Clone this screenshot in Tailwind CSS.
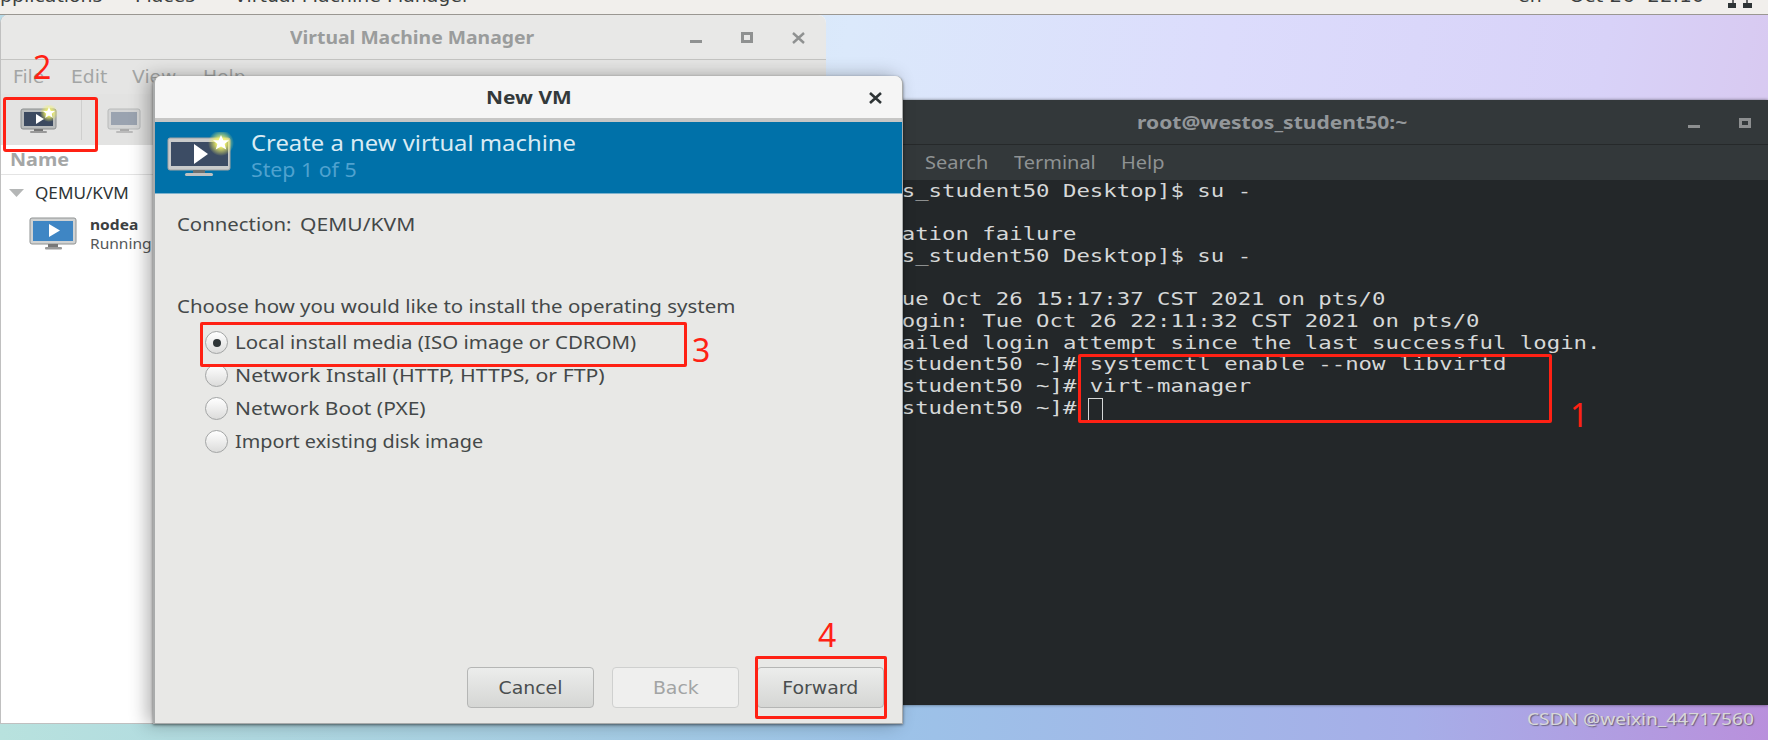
<!DOCTYPE html>
<html>
<head>
<meta charset="utf-8">
<script src="https://cdn.jsdelivr.net/npm/@tailwindcss/browser@4"></script>
</head>
<body class="m-0">
<div class="relative w-[1768px] h-[740px] overflow-hidden font-['DejaVu_Sans',sans-serif] bg-[linear-gradient(100deg,#b9dbe8_0%,#dbe9fb_45%,#dcdcfc_65%,#d8d2f8_85%,#d8c4ec_100%)]">
  <!-- lower desktop strip -->
  <div class="absolute left-0 right-0 bottom-0 h-[36px] bg-[linear-gradient(90deg,#b8e2de_0%,#9cc3e8_50%,#a6aee8_80%,#b990dc_100%)]"></div>

  <!-- Top bar -->
  <div class="absolute left-0 top-0 w-full h-[15px] bg-[#f1efec] border-b border-[#9a9792] overflow-hidden text-[#3c3f40] text-[18px] leading-none">
    <span class="absolute left-[-13px] top-[-13px] origin-left scale-x-[1.05]">Applications</span>
    <span class="absolute left-[135px] top-[-13px] origin-left scale-x-[1.05]">Places</span>
    <span class="absolute left-[234px] top-[-13px] origin-left scale-x-[1.05]">Virtual Machine Manager</span>
    <span class="absolute left-[1518px] top-[-13px] origin-left scale-x-[1.05]">en</span>
    <span class="absolute left-[1569px] top-[-13px] origin-left scale-x-[1.1]">Oct 26&nbsp;&nbsp;22:10</span>
    <svg class="absolute left-[1728px] top-0" width="24" height="9" viewBox="0 0 24 9"><path d="M5 0v4M19 0v4" stroke="#3c3f40" stroke-width="1.5"/><rect x="0" y="3" width="8" height="5" fill="#2e3436"/><rect x="15" y="3" width="9" height="5" fill="#2e3436"/></svg>
  </div>

  <!-- Terminal -->
  <div class="absolute left-[700px] top-[100px] w-[1068px] h-[605px] flex flex-col bg-[#232729] shadow-[0_0_3px_rgba(0,0,0,0.5)]">
    <div class="relative h-[45px] shrink-0 bg-[#33383a] border-b border-[#26292a]">
      <span class="absolute left-[437px] top-[9px] text-[18px] leading-[26px] font-bold text-[#93979a] font-['Noto_Sans',sans-serif] origin-left scale-x-[1.17]">root@westos_student50:~</span>
      <div class="absolute left-[988px] top-[25px] w-[12px] h-[3px] bg-[#8d8f90]"></div>
      <div class="absolute left-[1039px] top-[18px] w-[12px] h-[10px] border-[3px] border-[#8d8f90]"></div>
    </div>
    <div class="h-[35px] shrink-0 bg-[#33383a] flex items-center pl-[225px] text-[18px] text-[#8e9293] font-['Noto_Sans',sans-serif]">
      <span class="w-[89px] origin-left scale-x-[1.11]">Search</span><span class="w-[107px] origin-left scale-x-[1.11]">Terminal</span><span class="origin-left scale-x-[1.11]">Help</span>
    </div>
    <pre class="m-0 mt-px ml-[27px] text-[17px] leading-[21.67px] text-[#d6d8d8] font-['DejaVu_Sans_Mono',monospace] origin-left scale-x-[1.313]">[westos@westos_student50 Desktop]$ su -
Password:
su: Authentication failure
[westos@westos_student50 Desktop]$ su -
Password:
Last login: Tue Oct 26 15:17:37 CST 2021 on pts/0
Last failed login: Tue Oct 26 22:11:32 CST 2021 on pts/0
There was 1 failed login attempt since the last successful login.
[root@westos_student50 ~]# systemctl enable --now libvirtd
[root@westos_student50 ~]# virt-manager
[root@westos_student50 ~]#</pre>
    <div class="absolute left-[388px] top-[298px] w-[15px] h-[23px] border border-[#d6d8d8]"></div>
  </div>

  <!-- VMM window -->
  <div class="absolute left-0 top-[15px] w-[826px] h-[709px] rounded-t-[8px] bg-white border-l border-[#c0c0c0] border-b flex flex-col overflow-hidden">
    <div class="relative h-[45px] shrink-0 bg-[#e8e8e7] border-b border-[#c4c4c2]">
      <span class="absolute left-[289px] top-[9px] text-[18px] leading-[26px] font-bold text-[#9a9c9c] font-['Noto_Sans',sans-serif] origin-left scale-x-[1.075]">Virtual Machine Manager</span>
      <div class="absolute left-[689px] top-[25px] w-[12px] h-[3px] bg-[#8f9191]"></div>
      <div class="absolute left-[740px] top-[17px] w-[12px] h-[11px] border-[3px] border-[#8f9191]"></div>
      <svg class="absolute left-[791px] top-[17px]" width="13" height="12" viewBox="0 0 13 12"><path d="M1 1l11 10M12 1L1 11" stroke="#8f9191" stroke-width="2.4"/></svg>
    </div>
    <div class="h-[34px] shrink-0 bg-[#e5e5e4] flex items-center pl-[12px] pt-[2px] text-[17px] text-[#a3a5a5]">
      <span class="w-[58px] origin-left scale-x-[1.1]">File</span><span class="w-[61px] origin-left scale-x-[1.1]">Edit</span><span class="w-[71px] origin-left scale-x-[1.1]">View</span><span class="origin-left scale-x-[1.1]">Help</span>
    </div>
    <div class="relative h-[51px] shrink-0 bg-[#e3e3e2]">
      <svg class="absolute left-[18px] top-[11px]" width="40" height="30" viewBox="0 0 40 30"><defs><radialGradient id="g1"><stop offset="0.3" stop-color="#f4f46a"/><stop offset="1" stop-color="#f4f46a" stop-opacity="0"/></radialGradient></defs><rect x="2" y="4" width="35" height="20" rx="2" fill="#b9bcbc" stroke="#8b8e8e"/><rect x="5" y="7" width="29" height="14" fill="#3c4a60"/><path d="M17 9v10l8-5z" fill="#fff"/><rect x="15" y="24" width="9" height="2" fill="#777"/><rect x="11" y="26" width="17" height="2" rx="1" fill="#999"/><circle cx="30" cy="8" r="9" fill="url(#g1)"/><path d="M30 2l1.800 4h4.200l-3.300 2.800 1.200 4.200-3.900-2.400-3.900 2.400 1.200-4.200-3.300-2.800h4.200z" fill="#fff"/></svg>
      <div class="absolute left-[80px] top-[6px] w-px h-[40px] bg-[#cfcfce]"></div>
      <svg class="absolute left-[105px] top-[11px]" width="36" height="30" viewBox="0 0 36 30"><rect x="2" y="4" width="32" height="20" rx="2" fill="#d4d5d5" stroke="#b8baba"/><rect x="5" y="7" width="26" height="13" fill="#9aa3b0"/><rect x="14" y="24" width="9" height="2" fill="#aaa"/><rect x="10" y="26" width="17" height="2" rx="1" fill="#bbb"/></svg>
    </div>
    <div class="h-[30px] shrink-0 bg-white border-b border-[#e4e4e4] pl-[9px] pt-[1px] text-[18px] leading-[26px] font-bold text-[#a4a6a6] font-['Noto_Sans',sans-serif]"><span class="inline-block origin-left scale-x-[1.1]">Name</span></div>
    <div class="flex items-center h-[36px] shrink-0 pl-[8px] gap-[11px] text-[16px] text-[#2e3436] font-['Noto_Sans',sans-serif]">
      <svg width="15" height="8" viewBox="0 0 15 8"><path d="M0 0h15L7.500 8z" fill="#b4b6b6"/></svg>
      <span class="origin-left scale-x-[1.07]">QEMU/KVM</span>
    </div>
    <div class="flex items-start pl-[28px] pt-[6px] gap-[13px]">
      <svg width="48" height="34" viewBox="0 0 48 34"><rect x="1" y="1" width="46" height="26" rx="2" fill="#d0d2d2" stroke="#8f9292"/><rect x="4" y="4" width="40" height="20" fill="#3f86c4"/><path d="M20 7v13l11-6.500z" fill="#fff"/><rect x="19" y="27" width="10" height="3" fill="#777"/><rect x="16" y="30" width="17" height="2.500" rx="1" fill="#999"/></svg>
      <div class="flex flex-col text-[14px] leading-[19px] text-[#555859] -mt-[2px] font-['Noto_Sans',sans-serif]">
        <span class="font-bold text-[#3c4041] origin-left scale-x-[1.11]">nodea</span>
        <span class="origin-left scale-x-[1.11]">Running</span>
      </div>
    </div>
  </div>

  <!-- New VM dialog -->
  <div class="absolute left-[153px] top-[76px] w-[750px] h-[648px] rounded-t-[8px] bg-[#e8e8e6] border-l-2 border-r border-b border-[#a9abab] flex flex-col overflow-hidden shadow-[-6px_0_18px_rgba(0,0,0,0.3),0_1px_3px_rgba(0,0,0,0.5)]">
    <div class="relative h-[46px] shrink-0 bg-[#f5f5f5] border-b-[4px] border-[#c6c6c5] flex items-center justify-center">
      <span class="text-[18px] font-bold text-[#33393a] font-['Noto_Sans',sans-serif] scale-x-[1.16]">New VM</span>
      <svg class="absolute left-[714px] top-[16px]" width="13" height="12" viewBox="0 0 13 12"><path d="M1 1l11 10M12 1L1 11" stroke="#2e3436" stroke-width="2.600"/></svg>
    </div>
    <div class="flex items-center h-[72px] shrink-0 bg-[#0071a9] border-b border-[#7eb2cd] pl-[12px] gap-[16px]">
      <svg width="68" height="52" viewBox="0 0 68 52"><defs><radialGradient id="g2"><stop offset="0.3" stop-color="#f5f56a"/><stop offset="1" stop-color="#f5f56a" stop-opacity="0"/></radialGradient></defs><rect x="1" y="6" width="62" height="32" rx="2" fill="#c9cbcb" stroke="#a0a3a3"/><rect x="4" y="10" width="57" height="24" fill="#3c4c64"/><path d="M27 12v20l14-10z" fill="#fff"/><rect x="26" y="38" width="12" height="3" fill="#6c6f6f"/><rect x="18" y="41" width="28" height="3" rx="1.500" fill="#bfc1c1"/><circle cx="54" cy="11" r="13" fill="url(#g2)"/><path d="M54 3l2.400 5.200h5.600l-4.400 3.800 1.600 5.600-5.200-3.200-5.200 3.200 1.600-5.600-4.400-3.800h5.600z" fill="#fff"/></svg>
      <div class="flex flex-col -mt-[3px] font-['Noto_Sans',sans-serif]">
        <span class="text-[21px] leading-[28px] text-[#d9ebf4] origin-left scale-x-[1.135]">Create a new virtual machine</span>
        <span class="text-[19px] leading-[26px] text-[#4fa2cf] origin-left scale-x-[1.12]">Step 1 of 5</span>
      </div>
    </div>
    <div class="flex flex-col grow pl-[22px] text-[18px] text-[#444849] font-['Noto_Sans',sans-serif]">
      <div class="mt-[18px] leading-[24px] flex"><span class="w-[123px] origin-left scale-x-[1.13]">Connection:</span><span class="origin-left scale-x-[1.17]">QEMU/KVM</span></div>
      <div class="mt-[58px] leading-[24px] origin-left scale-x-[1.137]">Choose how you would like to install the operating system</div>
      <div class="flex flex-col pl-[28px] mt-[8px]">
        <div class="flex items-center h-[33px] gap-[7px]"><span class="flex items-center justify-center w-[23px] h-[23px] rounded-full border border-[#a3a5a5] bg-[linear-gradient(#fff,#dcdcdb)]"><span class="w-[8px] h-[8px] rounded-full bg-[#2e3436]"></span></span><span class="origin-left scale-x-[1.137]">Local install media (ISO image or CDROM)</span></div>
        <div class="flex items-center h-[33px] gap-[7px]"><span class="w-[23px] h-[23px] rounded-full border border-[#a3a5a5] bg-[linear-gradient(#fff,#dcdcdb)]"></span><span class="origin-left scale-x-[1.18]">Network Install (HTTP, HTTPS, or FTP)</span></div>
        <div class="flex items-center h-[33px] gap-[7px]"><span class="w-[23px] h-[23px] rounded-full border border-[#a3a5a5] bg-[linear-gradient(#fff,#dcdcdb)]"></span><span class="origin-left scale-x-[1.165]">Network Boot (PXE)</span></div>
        <div class="flex items-center h-[33px] gap-[7px]"><span class="w-[23px] h-[23px] rounded-full border border-[#a3a5a5] bg-[linear-gradient(#fff,#dcdcdb)]"></span><span class="origin-left scale-x-[1.1]">Import existing disk image</span></div>
      </div>
    </div>
    <div class="flex justify-end gap-[18px] pr-[18px] pb-[15px] text-[18px]">
      <div class="w-[127px] h-[41px] flex items-center justify-center rounded-[4px] border border-[#b5b6b5] bg-[linear-gradient(#ecedec,#d5d6d4)] text-[#4a4e4f]"><span class="scale-x-[1.05]">Cancel</span></div>
      <div class="w-[127px] h-[41px] flex items-center justify-center rounded-[4px] border border-[#cfd0cf] bg-[#efefee] text-[#a2a4a4]"><span class="scale-x-[1.05]">Back</span></div>
      <div class="w-[127px] h-[41px] flex items-center justify-center rounded-[4px] border border-[#b5b6b5] bg-[linear-gradient(#ecedec,#d5d6d4)] text-[#4a4e4f]"><span class="scale-x-[1.05]">Forward</span></div>
    </div>
  </div>

  <!-- Red annotations -->
  <div class="absolute left-[3px] top-[97px] w-[95px] h-[55px] border-[3px] border-[#ff2114] rounded-[3px]"></div>
  <div class="absolute left-[200px] top-[322px] w-[487px] h-[45px] border-[3px] border-[#ff2114] rounded-[2px]"></div>
  <div class="absolute left-[1078px] top-[354px] w-[474px] h-[69px] border-[3px] border-[#ff2114] rounded-[2px]"></div>
  <div class="absolute left-[755px] top-[656px] w-[132px] h-[63px] border-[3px] border-[#ff2114] rounded-[2px]"></div>
  <span class="absolute left-[33px] top-[45px] text-[32px] leading-[44px] text-[#ff2114] font-['Noto_Sans',sans-serif]">2</span>
  <span class="absolute left-[692px] top-[328px] text-[32px] leading-[44px] text-[#ff2114] font-['Noto_Sans',sans-serif]">3</span>
  <span class="absolute left-[1570px] top-[393px] text-[32px] leading-[44px] text-[#ff2114] font-['Noto_Sans',sans-serif]">1</span>
  <span class="absolute left-[818px] top-[613px] text-[32px] leading-[44px] text-[#ff2114] font-['Noto_Sans',sans-serif]">4</span>

  <!-- Watermark -->
  <span class="absolute left-[1527px] top-[707px] text-[17px] leading-[24px] text-[#d8d8d8] [text-shadow:1px_1px_1px_rgba(60,60,60,0.6)] font-['Noto_Sans',sans-serif] origin-left scale-x-[1.125]">CSDN @weixin_44717560</span>
</div>
</body>
</html>
